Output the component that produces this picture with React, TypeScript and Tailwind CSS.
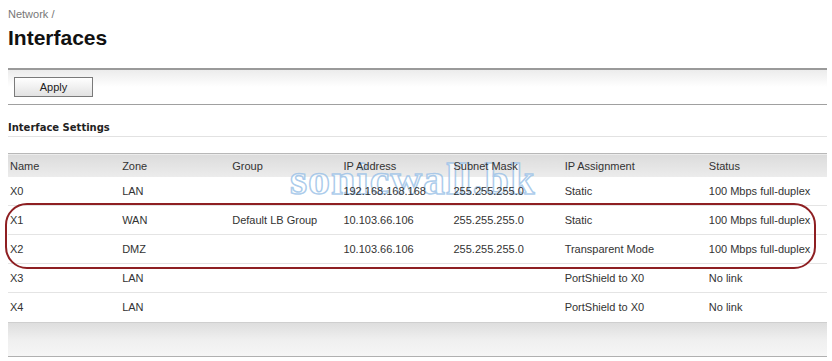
const rows = [
  { name: "X0", zone: "LAN", group: "", ip: "192.168.168.168", mask: "255.255.255.0", assign: "Static", status: "100 Mbps full-duplex" },
  { name: "X1", zone: "WAN", group: "Default LB Group", ip: "10.103.66.106", mask: "255.255.255.0", assign: "Static", status: "100 Mbps full-duplex" },
  { name: "X2", zone: "DMZ", group: "", ip: "10.103.66.106", mask: "255.255.255.0", assign: "Transparent Mode", status: "100 Mbps full-duplex" },
  { name: "X3", zone: "LAN", group: "", ip: "", mask: "", assign: "PortShield to X0", status: "No link" },
  { name: "X4", zone: "LAN", group: "", ip: "", mask: "", assign: "PortShield to X0", status: "No link" },
];

const cols = ["w-[112px]", "w-[110px]", "w-[111px]", "w-[110px]", "w-[111px]", "w-[144px]", "w-[120px]"];
const heads = ["Name", "Zone", "Group", "IP Address", "Subnet Mask", "IP Assignment", "Status"];

export default function App() {
  return (
    <div className="relative w-[832px] h-[361px] bg-white overflow-hidden text-[#333] text-[11px]" style={{ fontFamily: '"Liberation Sans", Arial, sans-serif' }}>
      {/* watermark, painted under the table text */}
      <div
        className="pointer-events-none absolute left-[290px] top-[158px] text-[44px] font-bold tracking-[1px] text-white/70 leading-none select-none"
        style={{ fontFamily: '"Liberation Serif", "Times New Roman", serif', WebkitTextStroke: "1.5px rgba(150,190,230,0.8)" }}
      >
        sonicwall.bk
      </div>

      <div className="pl-2 pt-[8px] text-[#777] leading-[13px]">Network /</div>
      <h1 className="pl-2 mt-[5px] text-[21px] font-bold leading-[24px] text-[#111]">Interfaces</h1>

      <div className="ml-2 mt-[18px] w-[819px] h-[37px] border-t-2 border-b border-t-[#9a9a9a] border-b-[#a0a0a0] bg-gradient-to-b from-[#ececec] via-white to-white flex items-center pl-[6px]">
        <button className="w-[79px] h-[20px] border border-[#7a7a7a] bg-gradient-to-b from-white to-[#e2e2e2] text-[11px] text-[#222] leading-none">
          Apply
        </button>
      </div>

      <div className="ml-2 mt-[16px] w-[819px] font-bold text-[#222] leading-[13px] pb-[2px] border-b border-[#e2e2e2]" style={{ fontFamily: '"DejaVu Sans", Verdana, sans-serif', fontSize: "10px" }}>
        Interface Settings
      </div>

      <table className="ml-2 mt-[16px] w-[819px] border-collapse table-fixed">
        <thead>
          <tr className="h-[23px] bg-gradient-to-b from-[#dcdcdc] to-[#ececec] border-t border-[#b8b8b8]">
            {heads.map((h, i) => (
              <th key={h} className={`${cols[i]} relative text-left font-normal pl-[2px] pt-[1px]`}>{h}</th>
            ))}
          </tr>
        </thead>
        <tbody>
          {rows.map((r) => (
            <tr key={r.name} className="h-[29px] border-b border-[#e4e4e4] last:border-b-0">
              <td className="relative pl-[2px]">{r.name}</td>
              <td className="relative pl-[2px]">{r.zone}</td>
              <td className="relative pl-[2px]">{r.group}</td>
              <td className="relative pl-[2px]">{r.ip}</td>
              <td className="relative pl-[2px]">{r.mask}</td>
              <td className="relative pl-[2px]">{r.assign}</td>
              <td className="relative pl-[2px]">{r.status}</td>
            </tr>
          ))}
        </tbody>
      </table>

      <div className="ml-2 w-[819px] h-[35px] border-t border-[#cfcfcf] border-b border-b-[#b0b0b0] bg-gradient-to-b from-[#dedede] via-[#efefef] to-[#f6f6f6]" />

      {/* highlight ring */}
      <div className="pointer-events-none absolute left-[5px] top-[203px] w-[811px] h-[66px] rounded-[22px] border-2 border-[#8e1f22]" />
    </div>
  );
}
